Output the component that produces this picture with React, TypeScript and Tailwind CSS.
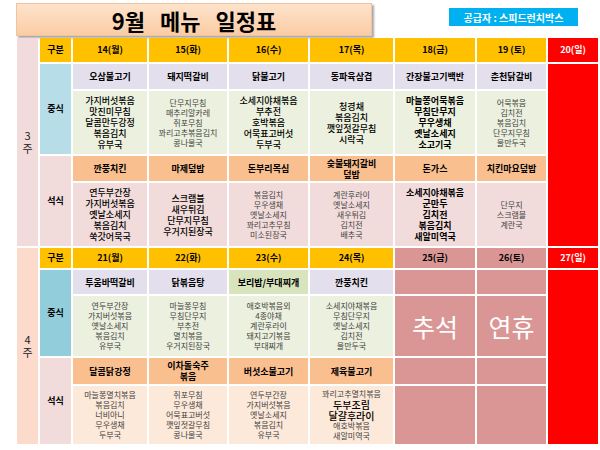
import React from "react";

type St = "g" | "k" | "b";

const txt: Record<St, string> = {
  g: "text-[8px] leading-[10px] text-[#3f3f3f]",
  k: "text-[9px] leading-[11px] text-black font-medium",
  b: "text-[9px] leading-[11px] text-black font-bold",
};

type Side = { st: St; l: string[] };

type Week = {
  label: string;
  weekBg: string;
  lunchBg: string;
  dinnerSideBg: string;
  dates: string[];
  holidays: string[];
  holidayText: string[];
  sun: string;
  lunchMain: { t: string; green?: boolean }[];
  lunchSides: Side[];
  dinnerMain: string[];
  dinnerSides: Side[];
};

const weeks: Week[] = [
  {
    label: "3",
    weekBg: "bg-[#f2dcdb]",
    lunchBg: "bg-[#b7dee8]",
    dinnerSideBg: "bg-[#f2dcdb]",
    dates: ["14(월)", "15(화)", "16(수)", "17(목)", "18(금)", "19 (토)"],
    holidays: [],
    holidayText: [],
    sun: "20(일)",
    lunchMain: [
      { t: "오삼불고기" },
      { t: "돼지떡갈비" },
      { t: "닭불고기" },
      { t: "동파육삼겹" },
      { t: "간장불고기백반" },
      { t: "춘천닭갈비" },
    ],
    lunchSides: [
      { st: "k", l: ["가지버섯볶음", "맛진미무침", "달콤만두강정", "볶음김치", "유부국"] },
      { st: "g", l: ["단무지무침", "매추리알카레", "쥐포무침", "꽈리고추볶음김치", "콩나물국"] },
      { st: "k", l: ["소세지야채볶음", "부추전", "호박볶음", "어묵표고버섯", "두부국"] },
      { st: "k", l: ["청경채", "볶음김치", "깻잎젓갈무침", "시락국"] },
      { st: "b", l: ["마늘쫑어묵볶음", "무침단무지", "무우생채", "옛날소세지", "소고기국"] },
      { st: "g", l: ["어묵볶음", "김치전", "볶음김치", "단무지무침", "물만두국"] },
    ],
    dinnerMain: ["깐풍치킨", "마제덮밥", "돈부리목심", "숯불돼지갈비\n덮밥", "돈가스", "치킨마요덮밥"],
    dinnerSides: [
      { st: "k", l: ["연두부간장", "가지버섯볶음", "옛날소세지", "볶음김치", "쑥갓어묵국"] },
      { st: "k", l: ["스크램블", "새우튀김", "단무지무침", "우거지된장국"] },
      { st: "g", l: ["볶음김치", "무우생채", "옛날소세지", "꽈리고추무침", "미소된장국"] },
      { st: "g", l: ["계란후라이", "옛날소세지", "새우튀김", "김치전", "배추국"] },
      { st: "b", l: ["소세지야채볶음", "군만두", "김치전", "볶음김치", "새알미역국"] },
      { st: "g", l: ["단무지", "스크램블", "계란국"] },
    ],
  },
  {
    label: "4",
    weekBg: "bg-[#fcdacc]",
    lunchBg: "bg-[#92cddc]",
    dinnerSideBg: "bg-[#fde9d9]",
    dates: ["21(월)", "22(화)", "23(수)", "24(목)"],
    holidays: ["25(금)", "26(토)"],
    holidayText: ["추석", "연휴"],
    sun: "27(일)",
    lunchMain: [{ t: "투움바떡갈비" }, { t: "닭볶음탕" }, { t: "보리밥/부대찌개", green: true }, { t: "깐풍치킨" }],
    lunchSides: [
      { st: "g", l: ["연두부간장", "가지버섯볶음", "옛날소세지", "볶음김치", "유부국"] },
      { st: "g", l: ["마늘쫑무침", "무침단무지", "부추전", "멸치볶음", "우거지된장국"] },
      { st: "g", l: ["애호박볶음외", "4종야채", "계란후라이", "돼지고기볶음", "부대찌개"] },
      { st: "g", l: ["소세지야채볶음", "무침단무지", "옛날소세지", "김치전", "물만두국"] },
    ],
    dinnerMain: ["달콤닭강정", "이차돌숙주\n볶음", "버섯소불고기", "제육불고기"],
    dinnerSides: [
      { st: "g", l: ["마늘쫑멸치볶음", "볶음김치", "너비아니", "무우생채", "두부국"] },
      { st: "g", l: ["쥐포무침", "무우생채", "어묵표고버섯", "깻잎젓갈무침", "콩나물국"] },
      { st: "g", l: ["연두부간장", "가지버섯볶음", "옛날소세지", "볶음김치", "유부국"] },
      { st: "g", l: ["꽈리고추멸치볶음", "!두부조림", "!달걀후라이", "애호박볶음", "새알미역국"] },
    ],
  },
];

const center = "flex flex-col items-center justify-center text-center";

function SideCell({ side, bg }: { side: Side; bg: string }) {
  return (
    <div className={`${center} ${bg}`}>
      {side.l.map((line, i) =>
        line.startsWith("!") ? (
          <span key={i} className="text-[10px] leading-[11px] text-black font-medium">
            {line.slice(1)}
          </span>
        ) : (
          <span key={i} className={txt[side.st]}>
            {line}
          </span>
        ),
      )}
    </div>
  );
}

function MainCell({ text, bg }: { text: string; bg: string }) {
  return (
    <div className={`${center} ${bg} text-[9px] leading-[11px] font-bold text-black whitespace-pre-line`}>{text}</div>
  );
}

function renderWeek(w: Week) {
  const cells: React.ReactNode[] = [];
  cells.push(
    <div key="wk" className={`${center} row-span-5 ${w.weekBg} text-[11px] leading-[13px] text-[#222]`}>
      <span>{w.label}</span>
      <span>주</span>
    </div>,
  );
  cells.push(
    <div key="gb" className={`${center} bg-[#ffc000] text-[9px] font-bold text-black`}>
      구분
    </div>,
  );
  w.dates.forEach((d) =>
    cells.push(
      <div key={d} className={`${center} bg-[#ffc000] text-[9px] font-bold text-black`}>
        {d}
      </div>,
    ),
  );
  w.holidays.forEach((d) =>
    cells.push(
      <div key={d} className={`${center} bg-[#da9694] text-[9px] font-bold text-black`}>
        {d}
      </div>,
    ),
  );
  cells.push(
    <div key="sun" className={`${center} bg-[#ff0000] text-[9px] font-bold text-white`}>
      {w.sun}
    </div>,
  );

  // 중식
  cells.push(
    <div key="lunch" className={`${center} row-span-2 ${w.lunchBg} text-[9px] font-bold text-black`}>
      중식
    </div>,
  );
  w.lunchMain.forEach((m, i) =>
    cells.push(<MainCell key={`lm${i}`} text={m.t} bg={m.green ? "bg-[#d8e4bc]" : "bg-[#e4dfec]"} />),
  );
  w.holidays.forEach((_, i) => cells.push(<div key={`hlm${i}`} className="bg-[#da9694]" />));
  cells.push(<div key="sunbody" className="row-span-4 bg-[#ff0000]" />);
  w.lunchSides.forEach((s, i) => cells.push(<SideCell key={`ls${i}`} side={s} bg="bg-[#ebf1de]" />));
  w.holidayText.forEach((t, i) =>
    cells.push(
      <div key={`hls${i}`} className={`${center} bg-[#da9694] text-[25px] text-white leading-none`}>
        {t}
      </div>,
    ),
  );

  // 석식
  cells.push(
    <div key="dinner" className={`${center} row-span-2 bg-[#f2dcdb] text-[9px] font-bold text-black`}>
      석식
    </div>,
  );
  w.dinnerMain.forEach((m, i) => cells.push(<MainCell key={`dm${i}`} text={m} bg="bg-[#fabf8f]" />));
  w.holidays.forEach((_, i) => cells.push(<div key={`hdm${i}`} className="bg-[#da9694]" />));
  w.dinnerSides.forEach((s, i) => cells.push(<SideCell key={`ds${i}`} side={s} bg={w.dinnerSideBg} />));
  w.holidays.forEach((_, i) => cells.push(<div key={`hds${i}`} className="bg-[#da9694]" />));

  return cells;
}

export default function App() {
  return (
    <div className="w-[600px] h-[450px] overflow-hidden bg-white font-['Noto_Sans_CJK_KR',sans-serif]">
      <div className="flex items-start pl-[16px] pt-[3px]">
        <div className="flex h-[33px] w-[356px] items-center justify-center border border-[#f1c49e] bg-linear-to-b from-[#fde3cc] to-[#fbcca4] shadow-[2px_2px_2px_rgba(0,0,0,0.35)]">
          <h1 className="text-[22px] font-bold leading-none text-black [word-spacing:10px]">9월 메뉴 일정표</h1>
        </div>
        <div className="ml-[77px] mt-[5px] flex h-[18px] w-[129px] items-center justify-center bg-[#00b0f0] text-[10px] font-bold text-white">
          공급자 : 스피드런치박스
        </div>
      </div>

      <div className="ml-[17px] mt-[2px] grid grid-cols-[21px_31px_74px_78px_79px_83px_80px_69px_50px] grid-rows-[24px_25px_63px_25px_63px_20px_24px_60px_26px_58px] gap-[2px]">
        {weeks.map((w) => renderWeek(w))}
      </div>
    </div>
  );
}
